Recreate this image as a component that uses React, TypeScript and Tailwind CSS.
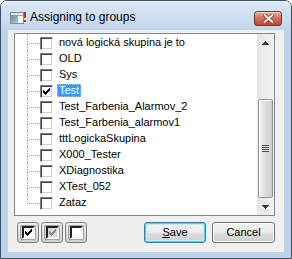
import React from 'react';

const items = [
	'nová logická skupina je to',
	'OLD',
	'Sys',
	'Test',
	'Test_Farbenia_Alarmov_2',
	'Test_Farbenia_alarmov1',
	'tttLogickaSkupina',
	'X000_Tester',
	'XDiagnostika',
	'XTest_052',
	'Zataz',
];

// classic 7x7 check, pixel by pixel
const checkPixels = [
	[8, 2, 1, 1],
	[7, 3, 2, 1],
	[2, 4, 1, 1],
	[6, 4, 3, 1],
	[2, 5, 2, 1],
	[5, 5, 3, 1],
	[2, 6, 5, 1],
	[3, 7, 3, 1],
	[4, 8, 1, 1],
];

const CheckMark = ({ color = '#000' }: { color?: string }) => (
	<svg width="11" height="11" viewBox="0 0 11 11" className="block" shapeRendering="crispEdges">
		{checkPixels.map(([x, y, w, h], i) => (
			<rect key={i} x={x} y={y} width={w} height={h} fill={color} />
		))}
	</svg>
);

const Box = ({ checked, className = '' }: { checked?: boolean; className?: string }) => (
	<div
		className={`h-[13px] w-[13px] shrink-0 border border-t-[#808080] border-l-[#808080] border-b-white border-r-white bg-white shadow-[inset_1px_1px_0_#404040,inset_-1px_-1px_0_#d4d0c8] ${className}`}
	>
		{checked && <CheckMark />}
	</div>
);

const TreeRow = ({ label, last, checked, selected }: { label: string; last: boolean; checked: boolean; selected: boolean }) => (
	<div className="flex h-[16px] shrink-0">
		<div className="flex w-[13px] shrink-0 flex-col">
			<div className="h-[10px] border-b border-l border-dotted border-[#a0a0a0]" />
			{!last && <div className="flex-1 border-l border-dotted border-[#a0a0a0]" />}
		</div>
		<Box checked={checked} className="mt-[3px]" />
		<span
			className={`ml-[4px] mt-[2px] h-[13px] whitespace-nowrap px-[2px] text-[11px] leading-[13px] ${
				selected ? 'bg-[#3399ff] text-white outline-1 outline-dotted outline-[#9cc9f5] -outline-offset-1' : 'text-black'
			}`}
		>
			{label}
		</span>
	</div>
);

const ToggleButton = ({ kind }: { kind: 'on' | 'mixed' | 'off' }) => (
	<div className="flex h-[21px] w-[22px] items-center justify-center rounded-[3px] border border-[#7f7f7f] bg-gradient-to-b from-[#ececec] to-[#d2d2d2] p-[2px]">
		<div className="flex h-full w-full items-center justify-center rounded-[1px] border border-[#a5a5a5] bg-[#cdcdcd]">
			<div
				className={`h-[13px] w-[13px] border-2 border-t-[#202020] border-l-[#202020] border-b-[#f4f4f4] border-r-[#f4f4f4] ${
					kind === 'mixed' ? 'bg-[#d6d6d6]' : 'bg-white'
				}`}
			>
				{kind !== 'off' && (
					<div className="-ml-[1px] -mt-[1px]">
						<CheckMark color={kind === 'mixed' ? '#8c8c8c' : '#000'} />
					</div>
				)}
			</div>
		</div>
	</div>
);

const Arrow = ({ down }: { down?: boolean }) => (
	<svg width="7" height="4" viewBox="0 0 7 4" className="block" shapeRendering="crispEdges">
		<path d={down ? 'M0 0h7L3.5 4z' : 'M3.5 0L7 4H0z'} fill="#3a3a3a" />
	</svg>
);

const WindowIcon = () => (
	<svg width="16" height="14" viewBox="0 0 16 14" className="block" shapeRendering="crispEdges">
		<defs>
			<linearGradient id="wi" x1="0" y1="0" x2="1" y2="1">
				<stop offset="0" stopColor="#5f8399" />
				<stop offset="1" stopColor="#b7dcc4" />
			</linearGradient>
		</defs>
		<rect x="0.5" y="1.5" width="13" height="11" fill="url(#wi)" stroke="#7d8c99" />
		<rect x="1" y="2" width="12" height="2" fill="#dfe8ef" />
		<rect x="8" y="5" width="5" height="7" fill="#f4f7f4" />
		<rect x="14" y="1" width="2" height="6" fill="#d42a1c" />
		<rect x="14" y="9" width="2" height="2" fill="#d42a1c" />
	</svg>
);

const CloseButton = () => (
	<div className="ml-auto mt-[2px] flex h-[15px] w-[28px] items-center justify-center rounded-[3px] border border-[#7a3329] bg-gradient-to-b from-[#eab0a4] via-[#d26a56] to-[#c4462f] shadow-[inset_0_1px_0_#f6d4cc]">
		<svg width="11" height="9" viewBox="0 0 11 9" className="block">
			<path d="M1.5 1 L9.5 8 M9.5 1 L1.5 8" stroke="#6b2a22" strokeWidth="3.4" strokeLinecap="round" />
			<path d="M1.5 1 L9.5 8 M9.5 1 L1.5 8" stroke="#ffffff" strokeWidth="2" strokeLinecap="round" />
		</svg>
	</div>
);

const App = () => {
	return (
		<div className="flex h-[259px] w-[292px] flex-col rounded-t-[7px] border border-[#3f5166] bg-[#bcd2ea] font-['Liberation_Sans',Arial,sans-serif]">
			{/* title bar */}
			<div className="flex h-[29px] shrink-0 items-start rounded-t-[6px] bg-gradient-to-b from-[#dce9f6] to-[#c0d5ec] pl-[9px] pr-[9px] pt-[8px] shadow-[inset_0_1px_0_#eef5fc]">
				<div className="mt-[2px]">
					<WindowIcon />
				</div>
				<span className="ml-[4px] text-[12px] leading-[16px] text-black">Assigning to groups</span>
				<CloseButton />
			</div>

			{/* client area */}
			<div className="mx-[7px] flex h-[222px] shrink-0 flex-col bg-[#f0f0f0] px-[6px] pt-[3px]">
				<div className="flex h-[183px] w-[261px] shrink-0 border border-[#828790] bg-white">
					<div className="flex flex-1 flex-col overflow-hidden pl-[12px]">
						{items.map((label, i) => (
							<TreeRow
								key={label}
								label={label}
								last={i === items.length - 1}
								checked={label === 'Test'}
								selected={label === 'Test'}
							/>
						))}
					</div>
					<div className="flex w-[17px] shrink-0 flex-col bg-gradient-to-r from-[#e6e6e6] to-[#f2f2f2]">
						<div className="flex h-[17px] shrink-0 items-center justify-center">
							<Arrow />
						</div>
						<div className="h-[48px] shrink-0" />
						<div className="mx-[1px] flex h-[99px] shrink-0 items-center justify-center rounded-[2px] border border-[#959595] bg-gradient-to-r from-[#f4f4f4] via-[#dcdcdc] to-[#cfcfcf] shadow-[inset_1px_1px_0_#ffffff]">
							<div className="flex flex-col gap-[1px]">
								<div className="h-[1px] w-[7px] bg-[#4f4f4f]" />
								<div className="h-[1px] w-[7px] bg-[#4f4f4f]" />
								<div className="h-[1px] w-[7px] bg-[#4f4f4f]" />
								<div className="h-[1px] w-[7px] bg-[#4f4f4f]" />
							</div>
						</div>
						<div className="flex h-[17px] shrink-0 items-center justify-center">
							<Arrow down />
						</div>
					</div>
				</div>

				<div className="mt-[6px] flex h-[21px] items-start pl-[3px] pr-[3px]">
					<div className="flex gap-[2px]">
						<ToggleButton kind="on" />
						<ToggleButton kind="mixed" />
						<ToggleButton kind="off" />
					</div>
					<div className="ml-auto flex gap-[6px]">
						<button className="flex h-[21px] w-[62px] items-center justify-center rounded-[3px] border border-[#3c7fb1] bg-[linear-gradient(#f2f2f2_0%,#ebebeb_50%,#dddddd_51%,#cfcfcf_100%)] text-[11px] text-black shadow-[inset_0_0_0_1px_#48d0f4,inset_0_0_0_2px_#c8eefb]">
							<span>
								<span className="underline">S</span>ave
							</span>
						</button>
						<button className="flex h-[21px] w-[63px] items-center justify-center rounded-[3px] border border-[#707070] bg-[linear-gradient(#f2f2f2_0%,#ebebeb_50%,#dddddd_51%,#cfcfcf_100%)] text-[11px] text-black shadow-[inset_0_0_0_1px_#fcfcfc]">
							Cancel
						</button>
					</div>
				</div>
			</div>
		</div>
	);
};

export default App;
